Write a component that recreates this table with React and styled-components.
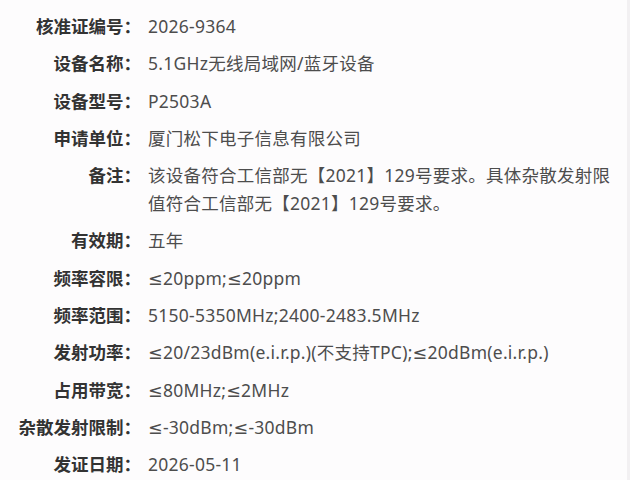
import React from "react";
import styled, { createGlobalStyle } from "styled-components";

const Global = createGlobalStyle`
  html, body { margin: 0; padding: 0; background: #fdfcfd; }
  #root { min-height: 100vh; }
`;

const Page = styled.div`
  width: 630px;
  min-height: 480px;
  box-sizing: border-box;
  border-right: 3px solid #f2f0f2;
  padding-top: 12px;
  font-family: "Noto Sans", "DejaVu Sans", "Noto Sans CJK SC", sans-serif;
`;

const List = styled.dl`
  margin: 0;
  display: grid;
  grid-template-columns: 141px 1fr;
  column-gap: 7px;
  row-gap: 9.3px;
`;

const Label = styled.dt`
  margin: 0;
  text-align: right;
  font-size: 17.5px;
  line-height: 28px;
  font-weight: 700;
  color: #333;
  white-space: nowrap;
  font-family: "Noto Sans CJK SC", sans-serif;
`;

const Value = styled.dd`
  margin: 0;
  font-size: 17.5px;
  line-height: 28px;
  letter-spacing: 0.25px;
  color: #4d4d4d;
`;

const rows = [
  ["核准证编号：", "2026-9364"],
  ["设备名称：", "5.1GHz无线局域网/蓝牙设备"],
  ["设备型号：", "P2503A"],
  ["申请单位：", "厦门松下电子信息有限公司"],
  ["备注：", "该设备符合工信部无【2021】129号要求。具体杂散发射限值符合工信部无【2021】129号要求。"],
  ["有效期：", "五年"],
  ["频率容限：", "≤20ppm;≤20ppm"],
  ["频率范围：", "5150-5350MHz;2400-2483.5MHz"],
  ["发射功率：", "≤20/23dBm(e.i.r.p.)(不支持TPC);≤20dBm(e.i.r.p.)"],
  ["占用带宽：", "≤80MHz;≤2MHz"],
  ["杂散发射限制：", "≤-30dBm;≤-30dBm"],
  ["发证日期：", "2026-05-11"],
];

export default function App() {
  return (
    <>
      <Global />
      <Page>
        <List>
          {rows.map(([k, v]) => (
            <React.Fragment key={k}>
              <Label>{k}</Label>
              <Value>{v}</Value>
            </React.Fragment>
          ))}
        </List>
      </Page>
    </>
  );
}
